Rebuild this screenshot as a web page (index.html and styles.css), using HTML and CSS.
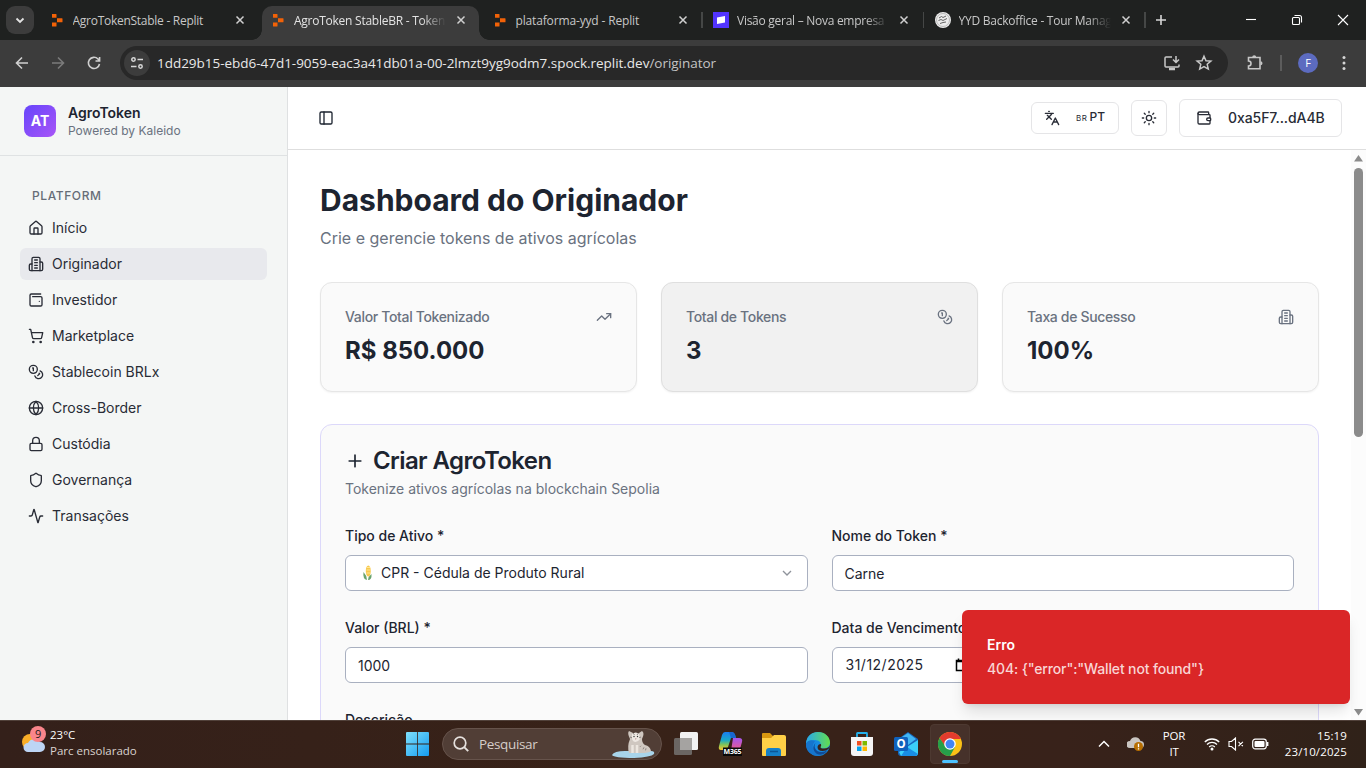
FILE: index.html
```html
<!DOCTYPE html>
<html lang="pt-BR">
<head>
<meta charset="utf-8">
<title>AgroToken StableBR</title>
<link rel="stylesheet" href="styles.css">
</head>
<body>
<svg class="defs" width="0" height="0">
  <defs>
    <symbol id="building" viewBox="0 0 24 24"><path d="M6 22V4a2 2 0 0 1 2-2h8a2 2 0 0 1 2 2v18Z"/><path d="M6 12H4a2 2 0 0 0-2 2v6a2 2 0 0 0 2 2h2"/><path d="M18 9h2a2 2 0 0 1 2 2v9a2 2 0 0 1-2 2h-2"/><path d="M10 6h4M10 10h4M10 14h4M10 18h4"/></symbol>
    <symbol id="coins" viewBox="0 0 24 24"><circle cx="8" cy="8" r="6"/><path d="M18.09 10.37A6 6 0 1 1 10.34 18"/><path d="M7 6h1v4"/><path d="m16.71 13.88.7.71-2.82 2.82"/></symbol>
    <symbol id="replit" viewBox="0 0 16 16"><path fill="#f26207" d="M3 2h4q.5 0 .5.5V5.700H3.500q-.5 0-.5-.5zM8 6.200h5q.5 0 .5.5v3q0 .5-.5.5H8zM3 10.500h4.500V14q0 .5-.5.5H3.500q-.5 0-.5-.5z"/></symbol>
    <symbol id="x" viewBox="0 0 16 16"><path d="m4.500 4.500 7 7m0-7-7 7" fill="none" stroke="#d0d0d0" stroke-width="1.500"/></symbol>
  </defs>
</svg>
<div class="screen">
  <div class="tabstrip">
    <div class="tab-search"><svg width="12" height="12" viewBox="0 0 12 12"><path d="m2.500 4.500 3.500 3.500 3.500-3.500" fill="none" stroke="#e3e3e3" stroke-width="1.800"/></svg></div>
    <div class="tabs">
      <div class="tab"><svg class="fav"><use href="#replit"/></svg><span class="tt"><span class="t1">AgroTokenStable - Replit</span></span><svg class="cl"><use href="#x"/></svg></div>
      <div class="tab active"><svg class="fav"><use href="#replit"/></svg><span class="tt fade"><span class="t2">AgroToken StableBR - Tokeni</span></span><svg class="cl"><use href="#x"/></svg></div>
      <div class="tab"><svg class="fav"><use href="#replit"/></svg><span class="tt"><span class="t3">plataforma-yyd - Replit</span></span><svg class="cl"><use href="#x"/></svg></div>
      <div class="tab sep"><svg class="fav" viewBox="0 0 16 16"><path fill="#5234ff" d="M0 0h16v16H0z"/><path fill="#fff" d="M4 5.500 12 4v6.500L4 12z"/></svg><span class="tt fade"><span class="t4">Visão geral – Nova empresa</span></span><svg class="cl"><use href="#x"/></svg></div>
      <div class="tab sep"><svg class="fav" viewBox="0 0 16 16"><circle cx="8" cy="8" r="8" fill="#ececec"/><circle cx="8" cy="8" r="6.500" fill="none" stroke="#999" stroke-width=".6"/><path d="m4 6 2.500-1.500L8 5.500l3-1.500M3.500 8.500 6 7.500l2 1 4-2M5 11.500l3-1 3-.5" stroke="#555" stroke-width=".9" fill="none"/></svg><span class="tt fade"><span class="t5">YYD Backoffice - Tour Manag</span></span><svg class="cl"><use href="#x"/></svg></div>
      <div class="newtab sep"><svg width="16" height="16" viewBox="0 0 16 16"><path d="M8 3v10M3 8h10" stroke="#d6d6d6" stroke-width="1.600"/></svg></div>
    </div>
    <div class="winctl">
      <svg width="46" height="40" viewBox="0 0 46 40"><path d="M18 19.500h10"/></svg>
      <svg width="46" height="40" viewBox="0 0 46 40"><rect x="18.500" y="17.500" width="7" height="7" rx="1"/><path d="M20.500 15.500h5a2 2 0 0 1 2 2v5"/></svg>
      <svg width="46" height="40" viewBox="0 0 46 40"><path d="m18 15 10 10m0-10-10 10"/></svg>
    </div>
  </div>
  <div class="toolbar">
    <svg class="nav" viewBox="0 0 16 16"><path d="M14 8H3m5-5.500L2.500 8 8 13.500"/></svg>
    <svg class="nav dim" viewBox="0 0 16 16"><path d="M2 8h11M8 2.500 13.500 8 8 13.500"/></svg>
    <svg class="nav" viewBox="0 0 16 16"><path d="M13.500 9A5.600 5.600 0 1 1 12 4l1.500 1.800M13.600 2v4H9.500"/></svg>
    <div class="omni">
      <span class="site"><svg width="16" height="16" viewBox="0 0 16 16"><g fill="none" stroke="#d8d8d8" stroke-width="1.500"><circle cx="4.500" cy="4.500" r="1.700"/><circle cx="11.500" cy="11.500" r="1.700"/><path d="M8.500 4.500H14M2 11.500h5.500"/></g></svg></span>
      <span class="url">1dd29b15-ebd6-47d1-9059-eac3a41db01a-00-2lmzt9yg9odm7.spock.replit.dev<i>/originator</i></span>
      <svg class="oi" viewBox="0 0 18 18"><path d="M9 3H3q-1 0-1 1v8q0 1 1 1h12q1 0 1-1v-1.500M13 2v6.500m-3-3 3 3 3-3"/><path d="M6 15h6" stroke-width="2.500"/></svg>
      <svg class="oi" viewBox="0 0 18 18"><path d="m9 2.200 2 4.500 4.900.4-3.700 3.200 1.100 4.800L9 12.600l-4.300 2.500 1.100-4.800-3.700-3.200 4.900-.4z"/></svg>
    </div>
    <svg class="ext" viewBox="0 0 18 18"><path d="M2.500 3.500H14V14.800H2.500V12a2.300 2.300 0 0 0 0-5z"/><path d="M6.200 3.200a2 2 0 0 1 4 0zM14.500 7.200a2 2 0 0 1 0 4z" fill="#c7c7c7" stroke="none"/></svg>
    <span class="vbar"></span>
    <span class="avatar">F</span>
    <svg class="dots" width="4" height="16" viewBox="0 0 4 16"><g fill="#d6d6d6"><circle cx="2" cy="2.500" r="1.500"/><circle cx="2" cy="8" r="1.500"/><circle cx="2" cy="13.500" r="1.500"/></g></svg>
  </div>
  <div class="page">
    <aside class="sidebar">
      <div class="brand"><span class="logo">AT</span><div><div class="bname">AgroToken</div><div class="bsub">Powered by Kaleido</div></div></div>
      <div class="group">
        <div class="glabel">PLATFORM</div>
        <nav class="menu">
          <a><svg class="ic" viewBox="0 0 24 24"><path d="M15 21v-8a1 1 0 0 0-1-1h-4a1 1 0 0 0-1 1v8"/><path d="M3 10a2 2 0 0 1 .709-1.528l7-5.999a2 2 0 0 1 2.582 0l7 5.999A2 2 0 0 1 21 10v9a2 2 0 0 1-2 2H5a2 2 0 0 1-2-2z"/></svg><span>Início</span></a>
          <a class="on"><svg class="ic"><use href="#building"/></svg><span>Originador</span></a>
          <a><svg class="ic" viewBox="0 0 24 24"><path d="M17 14h.01"/><path d="M7 7h12a2 2 0 0 1 2 2v10a2 2 0 0 1-2 2H5a2 2 0 0 1-2-2V5a2 2 0 0 1 2-2h14"/></svg><span>Investidor</span></a>
          <a><svg class="ic" viewBox="0 0 24 24"><circle cx="8" cy="21" r="1"/><circle cx="19" cy="21" r="1"/><path d="M2.050 2.050h2l2.660 12.420a2 2 0 0 0 2 1.580h9.780a2 2 0 0 0 1.950-1.570l1.650-7.430H5.120"/></svg><span>Marketplace</span></a>
          <a><svg class="ic"><use href="#coins"/></svg><span>Stablecoin BRLx</span></a>
          <a><svg class="ic" viewBox="0 0 24 24"><circle cx="12" cy="12" r="10"/><path d="M12 2a14.500 14.500 0 0 0 0 20 14.500 14.500 0 0 0 0-20M2 12h20"/></svg><span>Cross-Border</span></a>
          <a><svg class="ic" viewBox="0 0 24 24"><rect width="18" height="11" x="3" y="11" rx="2"/><path d="M7 11V7a5 5 0 0 1 10 0v4"/></svg><span>Custódia</span></a>
          <a><svg class="ic" viewBox="0 0 24 24"><path d="M20 13c0 5-3.500 7.500-7.660 8.950a1 1 0 0 1-.67-.01C7.500 20.500 4 18 4 13V6a1 1 0 0 1 1-1c2 0 4.500-1.200 6.240-2.720a1.170 1.170 0 0 1 1.520 0C14.510 3.810 17 5 19 5a1 1 0 0 1 1 1z"/></svg><span>Governança</span></a>
          <a><svg class="ic" viewBox="0 0 24 24"><path d="M22 12h-2.480a2 2 0 0 0-1.930 1.460l-2.350 8.360a.25.25 0 0 1-.48 0L9.240 2.180a.25.25 0 0 0-.48 0l-2.350 8.360A2 2 0 0 1 4.490 12H2"/></svg><span>Transações</span></a>
        </nav>
      </div>
    </aside>
    <main class="main">
      <header class="top">
        <svg class="ic panel" viewBox="0 0 24 24"><rect width="18" height="18" x="3" y="3" rx="2"/><path d="M9 3v18"/></svg>
        <div class="acts">
          <button class="btn lang"><svg class="ic" viewBox="0 0 24 24"><path d="m5 8 6 6M4 14l6-6 2-3M2 5h12M7 2h1M22 22l-5-10-5 10M14 18h6"/></svg><span><small>BR</small> PT</span></button>
          <button class="btn sun"><svg class="ic" viewBox="0 0 24 24"><circle cx="12" cy="12" r="4"/><path d="M12 2v2M12 20v2M4.930 4.930l1.410 1.410M17.660 17.660l1.410 1.410M2 12h2M20 12h2M6.340 17.660l-1.410 1.410M19.070 4.930l-1.410 1.410"/></svg></button>
          <button class="btn wal"><svg class="ic" viewBox="0 0 24 24"><path d="M19 7V4a1 1 0 0 0-1-1H5a2 2 0 0 0 0 4h15a1 1 0 0 1 1 1v4h-3a2 2 0 0 0 0 4h3a1 1 0 0 0 1-1v-2a1 1 0 0 0-1-1"/><path d="M3 5v14a2 2 0 0 0 2 2h15a1 1 0 0 0 1-1v-4"/></svg><span>0xa5F7...dA4B</span></button>
        </div>
      </header>
      <div class="scroll">
        <div class="content">
          <h1>Dashboard do Originador</h1>
          <p class="sub">Crie e gerencie tokens de ativos agrícolas</p>
          <section class="stats">
            <div class="card"><div class="ch"><span>Valor Total Tokenizado</span><svg class="ic" viewBox="0 0 24 24"><path d="M22 7 13.500 15.500 8.500 10.500 2 17"/><path d="M16 7h6v6"/></svg></div><b>R$ 850.000</b></div>
            <div class="card hov"><div class="ch"><span>Total de Tokens</span><svg class="ic"><use href="#coins"/></svg></div><b>3</b></div>
            <div class="card"><div class="ch"><span>Taxa de Sucesso</span><svg class="ic"><use href="#building"/></svg></div><b>100%</b></div>
          </section>
          <section class="form">
            <h2><svg class="plus" viewBox="0 0 24 24"><path d="M5 12h14M12 5v14"/></svg>Criar AgroToken</h2>
            <p class="fsub">Tokenize ativos agrícolas na blockchain Sepolia</p>
            <div class="fields">
              <div><label>Tipo de Ativo *</label><div class="inp sel"><svg class="corn" width="11" height="16" viewBox="0 0 11 16"><ellipse cx="6.300" cy="6" rx="2.500" ry="5.500" fill="#f8c84e"/><path d="M5 2.500h3M4.500 5h4M4.500 8h4" stroke="#fff0a4" stroke-width=".8"/><path d="M1.500 7q3 3 3.500 8-4.500-1-3.500-8M9.500 9q-3 2-3.500 6 4 0 3.500-6" fill="#69a36e"/></svg><span>CPR - Cédula de Produto Rural</span><svg class="chev" viewBox="0 0 24 24"><path d="m6 9 6 6 6-6"/></svg></div></div>
              <div><label>Nome do Token *</label><div class="inp">Carne</div></div>
              <div><label>Valor (BRL) *</label><div class="inp">1000</div></div>
              <div><label>Data de Vencimento *</label><div class="inp date"><span>31/12/2025</span><svg width="14" height="16" viewBox="0 0 14 16"><path d="M1.500 3.500h11v10h-11zM1.500 4.500h11M3.500 1.500v2M10.500 1.500v2" fill="none" stroke="#000" stroke-width="1.500"/></svg></div></div>
              <div><label>Descrição</label></div>
            </div>
          </section>
        </div>
        <div class="sbar"><svg width="9" height="7"><path d="M4.500 0 9 6.500H0z" fill="#8b8b8b"/></svg><span class="thumb"></span><svg class="dn" width="9" height="7"><path d="M0 0h9L4.500 6.500z" fill="#8b8b8b"/></svg></div>
      </div>
    </main>
  </div>
  <div class="toast"><strong>Erro</strong><span>404: {"error":"Wallet not found"}</span></div>
  <footer class="taskbar">
    <div class="weather">
      <svg width="30" height="38" viewBox="0 0 30 38"><circle cx="10" cy="18" r="8" fill="#f9ae28"/><path d="M8 28a4.500 4.500 0 0 1 0-9 7 7 0 0 1 12-1 5 5 0 0 1 0 10z" fill="#bdd5f5"/><circle cx="18" cy="10" r="8" fill="#f9858b"/><text x="18" y="14" text-anchor="middle" font-size="11" fill="#1b1b1b">9</text></svg>
      <div class="wtext"><span>23°C</span><span class="wsub">Parc ensolarado</span></div>
    </div>
    <div class="apps">
      <svg class="win" width="23" height="24" viewBox="0 0 23 24"><defs><linearGradient id="wg" x2="1" y2="1" gradientUnits="objectBoundingBox"><stop stop-color="#7fe0fc"/><stop offset="1" stop-color="#149cf0"/></linearGradient></defs><path fill="url(#wg)" d="M1 0h10.200v11.500H0V1q0-1 1-1zM12 0h10q1 0 1 1v10.500H12zM0 12.500h11.200V24H1q-1 0-1-1zM12 12.500h11V23q0 1-1 1H12z"/></svg>
      <div class="search">
        <svg width="18" height="18" viewBox="0 0 18 18"><circle cx="8" cy="8" r="5.800" fill="none" stroke="#e5e0dd" stroke-width="1.700"/><path d="m12.200 12.200 4 4" stroke="#e5e0dd" stroke-width="1.900"/></svg>
        <span>Pesquisar</span>
        <svg class="tiger" width="44" height="28" viewBox="0 0 44 28"><path d="M1 25q2-4 13-4h26q4 0 3 3-3 3-20 4-20 0-22-3z" fill="#a8d4ea"/><path d="M19 9q-3-6-1-8l4 2h6l3-2q3 2 0 8 0 4 3 6 5 1 6 6-2 2-10 2H18q-2-7 1-14z" fill="#cfc7c0"/><path d="M21 4q4-3 7 0l1 5q-2 3-4.500 3T21 9z" fill="#eee8e2"/><path d="m22 3 1.500 2m4-2-1.500 2M19 7l2 .8m9-.8-2 .8m-7 8 1 1m8-1-1 1m4 .5-1 2m3-1-.5 2" stroke="#7a7270" stroke-width=".8" fill="none"/><circle cx="23" cy="6.500" r=".7" fill="#333"/><circle cx="26.500" cy="6.500" r=".7" fill="#333"/><path d="m24 8.500.8 1.300.8-1.300z" fill="#a66c70"/><path d="M21.500 15v8m4.500-8v8" stroke="#ece6df" stroke-width="2.500"/></svg>
      </div>
      <svg class="app" viewBox="0 0 24 24"><rect x="6" y="0" width="18" height="18" rx="1.500" fill="#f2f2f2"/><rect x="0" y="6" width="18" height="17" rx="1.500" fill="#6b6663"/><path d="M6 6h12v12H6z" fill="#a5a3a1"/></svg>
      <svg class="app" viewBox="0 0 24 24"><defs><linearGradient id="mg" x2="0" y2="1"><stop stop-color="#1a7df0"/><stop offset=".45" stop-color="#19a8c8"/><stop offset=".7" stop-color="#7fc25a"/><stop offset="1" stop-color="#fac72b"/></linearGradient><linearGradient id="mh" x2="0" y2="1"><stop stop-color="#a555ef"/><stop offset="1" stop-color="#f55b7c"/></linearGradient></defs><path d="M7 0h7q2 0 3 3l1 3h-5l-3 9q-1 3-4 3H3q-3 0-2-4L4 3q1-3 3-3z" fill="url(#mg)"/><path d="M11 0h3q3 0 4 6h-5z" fill="#1767d0"/><path d="M15 6h6q4 0 3 4l-2 7q-1 3-5 3h-6q2 0 2.500-4z" fill="url(#mh)"/><rect x="5" y="15.500" width="19" height="8.500" fill="#080808"/><text x="14.500" y="22.300" text-anchor="middle" font-size="7" font-weight="700" fill="#fff">M365</text></svg>
      <svg class="app" viewBox="0 0 24 24"><path d="M0 2q0-1 1-1h7l3 3h11q2 0 2 2v4H0z" fill="#d99810"/><path d="M0 6h9l3-3h10q2 0 2 2v18q0 1-1 1H1q-1 0-1-1z" fill="#ffd047"/><path d="M4 24v-5q0-3 3-3h9q3 0 3 3v5z" fill="#1580c8"/><path d="M8 19.500h8" stroke="#0b5697" stroke-width="1.500"/></svg>
      <svg class="app" viewBox="0 0 24 24"><defs><linearGradient id="eg"><stop stop-color="#28a8ed"/><stop offset="1" stop-color="#63df4d"/></linearGradient></defs><circle cx="12" cy="12" r="12" fill="#168be0"/><path d="M.1 10.500C1 4 6 0 12 0c7 0 12 5 12 10.500 0 3.500-3 6-6.500 6-3 0-4-1.200-3.200-2.600C16 11 13 8 9 8 5 8 1.500 9 .1 12z" fill="url(#eg)"/><path d="M9 9.500c-4 3-3 12 5.500 14C7 25-.5 20 0 11.500 2 8 6 7.500 9 9.500z" fill="#1675cd"/><path d="M9.500 11c-2.500 4 .5 9 6 9q3.500 0 6-2c-4 7-12 6-14-.5-.5-2.500.3-5 2-6.500z" fill="#114c98"/><path d="M25 12q-2 4.500-7 4.500-3.500 0-3.500-1.500 1-1.200.5-3-3 0-3.500 3 0 4 5 4 3.500 0 6-2z" fill="#38231a"/></svg>
      <svg class="app" viewBox="0 0 24 24"><path d="M7 6V1.500Q7 1 7.500 1h9q.5 0 .5.500V6" fill="none" stroke="#23b1ed" stroke-width="1.800"/><path d="M1 5h22v16q0 3-3 3H4q-3 0-3-3z" fill="#f5f5f5"/><path fill="#f05022" d="M7 9h4.500v4.500H7z"/><path fill="#7fb900" d="M12.500 9H17v4.500h-4.500z"/><path fill="#01a3ee" d="M7 14.500h4.500V19H7z"/><path fill="#feb800" d="M12.500 14.500H17V19h-4.500z"/></svg>
      <svg class="app" viewBox="0 0 24 24"><path d="m4 7 10-7 10 7v14q0 3-3 3H7q-3 0-3-3z" fill="#1667bd"/><path d="m8 5 6-4 8 6-8 6H8z" fill="#42b6f3"/><path d="m5 20 19-12v13q0 3-3 3H7z" fill="#3bd0fa"/><path d="m13 15 11 7q-1 2-3 2H7z" fill="#198ee4"/><rect y="5" width="14" height="14" rx="1.500" fill="#0f62bd"/><text x="7" y="16" text-anchor="middle" font-size="11.500" font-weight="700" fill="#fff">O</text></svg>
      <div class="chrome"><svg width="24" height="24" viewBox="0 0 24 24"><circle cx="12" cy="12" r="12" fill="#fbc116"/><path d="M1.600 6A12 12 0 0 1 22.400 6L23 7H12l-4.700 8z" fill="#e33b2e"/><path d="M1.600 6A12 12 0 0 0 12 24l5-9-9.500-.5z" fill="#269f4a"/><circle cx="12" cy="12" r="5.800" fill="#fff"/><circle cx="12" cy="12" r="4.500" fill="#4285f4"/></svg></div>
    </div>
    <div class="tray">
      <svg class="up" width="12" height="8" viewBox="0 0 12 8"><path d="m1 6.500 5-5 5 5" fill="none" stroke="#fff" stroke-width="1.500"/></svg>
      <svg class="cloud" width="17" height="16" viewBox="0 0 17 16"><path d="M3 12a3.500 3.500 0 0 1 0-7 5.500 5.500 0 0 1 10.500 0 3.500 3.500 0 0 1 0 7z" fill="#c9c5c1"/><circle cx="11.500" cy="10.500" r="4.500" fill="#b76e00"/><path d="M11.500 7.700v3.500m0 1v1.300" stroke="#fff" stroke-width="1.300"/></svg>
      <div class="kb"><span>POR</span><span>IT</span></div>
      <svg class="wifi" width="16" height="14" viewBox="0 0 16 14"><g fill="none" stroke="#fff" stroke-width="1.300"><path d="M.8 5a10.200 10.200 0 0 1 14.400 0M3 7.500a7 7 0 0 1 10 0M5.200 10a4 4 0 0 1 5.600 0"/></g><circle cx="8" cy="12" r="1.500" fill="#fff"/></svg>
      <svg class="vol" width="16" height="14" viewBox="0 0 16 14"><path d="M1 4.500h2.500L7.500 1v12L3.500 9.500H1zM10.500 4.800l4.400 4.400m0-4.400-4.400 4.400" fill="none" stroke="#fff" stroke-width="1.100"/></svg>
      <svg class="bat" width="17" height="12" viewBox="0 0 17 12"><rect x=".7" y="1.200" width="13.600" height="9.600" rx="2.500" fill="none" stroke="#fff" stroke-width="1.200"/><rect x="2.500" y="3" width="10" height="6" rx="1" fill="#fff"/><path d="M15.700 4v4" stroke="#fff" stroke-width="1.400"/></svg>
      <div class="clock"><span>15:19</span><span class="cdate">23/10/2025</span></div>
    </div>
  </footer>
</div>
</body>
</html>
```
FILE: styles.css
```css
* { box-sizing: border-box; }
body { margin: 0; overflow: hidden; font-family: Inter, sans-serif; color: #1d2430; }
svg { flex: none; display: block; }
.defs { position: absolute; }
.screen { position: relative; width: 1366px; height: 768px; display: flex; flex-direction: column; overflow: hidden; }
.tabstrip, .toolbar, .taskbar { font-family: "Open Sans", "Noto Sans", sans-serif; }

.tabstrip { height: 40px; background: #1f2120; display: flex; align-items: center; flex: none; }
.tab-search { width: 28px; height: 28px; margin-left: 6px; border-radius: 9px; background: #3c3c3c; display: flex; align-items: center; justify-content: center; }
.tabs { display: flex; height: 40px; align-items: stretch; margin-left: 5.500px; }
.tab { width: 221.500px; padding-left: 9px; display: flex; align-items: center; position: relative; font-size: 12px; color: #c7c7c7; }
.fav { width: 16px; height: 16px; margin-right: 8px; }
.tt { width: 154px; overflow: hidden; white-space: nowrap; line-height: 20px; padding-top: 2px; margin-right: 5px; }
.tt.fade { -webkit-mask-image: linear-gradient(90deg, #000 128px, transparent 152px); mask-image: linear-gradient(90deg, #000 128px, transparent 152px); }
.t1, .t4 { letter-spacing: -.27px; }
.t3 { letter-spacing: -.15px; }
.t2, .t5 { letter-spacing: -.25px; }
.cl { width: 16px; height: 16px; }
.active { color: #e3e3e3; }
.active::before { content: ""; position: absolute; left: 1px; right: 4px; top: 6px; bottom: 0; background: #3c3c3c; border-radius: 10px 10px 0 0; }
.active > * { position: relative; }
.active::after { content: ""; position: absolute; left: -9px; right: -6px; bottom: 0; height: 10px; background: radial-gradient(circle at 0 0, transparent 9.500px, #3c3c3c 10px) left / 10px 10px no-repeat, radial-gradient(circle at 100% 0, transparent 9.500px, #3c3c3c 10px) right / 10px 10px no-repeat; }
.sep::before { content: ""; position: absolute; left: -3px; top: 12px; width: 1.500px; height: 16px; background: #454746; }
.newtab { position: relative; width: 32px; display: flex; align-items: center; padding-left: 6px; }
.winctl { margin-left: auto; display: flex; }
.winctl path, .winctl rect { fill: none; stroke: #fff; stroke-width: 1.100; }

.toolbar { height: 47px; background: #3c3c3c; display: flex; align-items: center; flex: none; padding: 0 0 1px 14px; }
.nav { width: 16px; height: 16px; margin-right: 20px; fill: none; stroke: #d0d0d0; stroke-width: 1.600; }
.nav.dim { stroke: #7b7b7b; }
.omni { margin-left: -2px; width: 1108px; height: 34px; border-radius: 17px; background: #282828; display: flex; align-items: center; padding: 0 15px 0 4px; }
.site { width: 26px; height: 26px; border-radius: 13px; background: #3c3c3c; display: flex; align-items: center; justify-content: center; margin-right: 7px; }
.url { font-size: 13.500px; letter-spacing: -.025px; color: #e8e8e8; flex: 1; white-space: nowrap; }
.url i { font-style: normal; color: #c4c4c4; }
.oi { width: 18px; height: 18px; fill: none; stroke: #c7c7c7; stroke-width: 1.500; margin-left: 14px; }
.ext { width: 18px; height: 18px; fill: none; stroke: #c7c7c7; stroke-width: 1.600; margin-left: 18px; }
.vbar { width: 2px; height: 16px; background: #5c5c5c; margin-left: 16px; }
.avatar { width: 20px; height: 20px; border-radius: 50%; background: #5c6bc0; color: #fff; font-size: 11px; line-height: 20px; text-align: center; margin-left: 16px; }
.dots { margin-left: 24px; }

.page { height: 633px; display: flex; background: #fff; }
.ic { width: 16px; height: 16px; fill: none; stroke: currentColor; stroke-width: 2; stroke-linecap: round; stroke-linejoin: round; }
.sidebar { width: 288px; background: #f4f6f5; border-right: 1px solid #dfe1e2; flex: none; }
.brand { height: 69px; border-bottom: 1px solid #dfe2e3; display: flex; align-items: center; padding-left: 24px; gap: 12px; }
.logo { width: 32px; height: 32px; border-radius: 8px; background: linear-gradient(135deg, #6645fb, #a855f7); color: #fff; font-weight: 700; font-size: 14px; line-height: 32px; text-align: center; }
.bname { font-size: 14px; font-weight: 600; line-height: 20px; }
.bsub { font-size: 12px; line-height: 16px; color: #6a7280; }
.group { padding: 24px 20px 0; }
.glabel { height: 32px; padding-left: 12px; line-height: 32px; font-size: 12px; font-weight: 500; letter-spacing: .6px; color: #666d77; }
.menu { display: flex; flex-direction: column; gap: 4px; }
.menu a { height: 32px; border-radius: 6px; display: flex; align-items: center; gap: 8px; padding-left: 8px; font-size: 14px; color: #292c36; }
.menu span { line-height: 20px; padding-bottom: 1px; }
.menu .on { background: #e8e9ed; }

.main { flex: 1; display: flex; flex-direction: column; min-width: 0; }
.top { height: 63px; border-bottom: 1px solid #dedede; display: flex; align-items: center; justify-content: space-between; padding: 0 24px 0 30px; flex: none; }
.acts { display: flex; align-items: center; gap: 12px; }
.btn { background: #fff; border: 1px solid #e5e5e7; border-radius: 6px; display: flex; align-items: center; font-family: Inter, sans-serif; font-weight: 500; color: #292c36; padding: 0; white-space: nowrap; }
.lang { width: 88px; height: 32px; font-size: 12px; padding-left: 12px; gap: 16px; }
.lang span { line-height: 16px; padding-bottom: 2px; }
.lang small { font-size: 8px; letter-spacing: .5px; font-weight: 400; margin-right: -1px; }
.sun { width: 36px; height: 36px; justify-content: center; }
.wal { width: 163px; height: 38px; font-size: 14px; padding-left: 16px; gap: 16px; letter-spacing: -.07px; }
.wal span { line-height: 20px; padding-bottom: 1px; }
.scroll { flex: 1; display: flex; min-height: 0; overflow: hidden; }
.content { width: 1063px; padding: 32px; flex: none; }
h1 { margin: 0; font-size: 30px; line-height: 36px; font-weight: 700; }
.sub { margin: 8px 0 32px; font-size: 16px; line-height: 24px; color: #6a7280; }
.stats { display: grid; grid-template-columns: repeat(3, 1fr); gap: 24px; }
.card { height: 110px; border: 1px solid #e6e6e6; border-radius: 12px; background: #fafafa; padding: 24px; box-shadow: 0 1px 2px rgba(0,0,0,.05); }
.card.hov { background: #f1f1f1; border-color: #dfdfdf; }
.ch { display: flex; justify-content: space-between; align-items: center; height: 20px; font-size: 14px; font-weight: 500; letter-spacing: -.34px; color: #6a7280; margin-bottom: 8px; }
.ch span { line-height: 20px; padding-bottom: 1px; }
.card b { display: block; font-size: 24px; line-height: 32px; font-weight: 700; }
.form { margin-top: 32px; height: 500px; border: 1px solid #dcd8fa; border-radius: 12px; background: #fafafa; padding: 24px; }
h2 { margin: 0; display: flex; align-items: center; gap: 8px; font-size: 24px; line-height: 24px; font-weight: 600; letter-spacing: -.6px; }
.plus { width: 20px; height: 20px; fill: none; stroke: currentColor; stroke-width: 2; stroke-linecap: round; }
.fsub { margin: 6px 0 27px; font-size: 14px; line-height: 20px; color: #6a7280; }
.fields { display: grid; grid-template-columns: 1fr 1fr; gap: 27px 24px; }
label { display: block; height: 29px; line-height: 20px; font-size: 14px; font-weight: 500; }
.inp { height: 36px; border: 1px solid #a9b0c0; border-radius: 6px; background: #fff; padding: 0 12px; font-size: 14px; line-height: 20px; display: flex; align-items: center; padding-top: 1px; }
.sel { padding-top: 0; }
.sel span { flex: 1; margin-left: 8px; padding-bottom: 1px; }
.corn { margin-left: 4px; }
.chev { width: 16px; height: 16px; fill: none; stroke: #8f939b; stroke-width: 2; }
.date { padding: 0 12px 1px 13px; }
.date span { width: 109px; letter-spacing: .5px; }
.sbar { width: 15px; background: #fcfcfc; display: flex; flex-direction: column; align-items: center; padding-top: 5px; }
.thumb { width: 9px; height: 269px; border-radius: 5px; background: #8b8b8b; margin-top: 6px; }
.sbar .dn { margin-top: auto; margin-bottom: 4px; }
.toast { position: absolute; left: 962px; top: 610px; width: 388px; height: 94px; background: #da2627; border-radius: 6px; padding: 25px; display: flex; flex-direction: column; gap: 4px; color: #fff; font-size: 14px; line-height: 20px; box-shadow: 0 10px 15px -3px rgba(0,0,0,.12), 0 4px 6px -4px rgba(0,0,0,.12); }
.toast strong { font-weight: 600; }
.toast span { color: #f8d5d5; font-weight: 500; letter-spacing: -.14px; }

.taskbar { height: 48px; background: linear-gradient(90deg, #34201a, #382218 45%, #38221a 78%, #302219); border-top: 1px solid #51413a; color: #fff; font-size: 11.500px; display: grid; grid-template-columns: 404px 580px 1fr; letter-spacing: -.2px; }
.weather { display: flex; padding: 0 0 3px 20px; align-items: center; }
.wtext { display: flex; flex-direction: column; line-height: 16px; letter-spacing: 0; }
.wsub { color: #d9d3cf; }
.apps { display: flex; align-items: center; padding: 0 0 1px 2px; }
.search { width: 220px; height: 32px; margin: 0 12px 0 13px; border-radius: 16px; border: 1px solid #66534b; background: #513e36; display: flex; align-items: center; padding: 0 6px 0 9px; color: #d5cdc9; font-size: 13.500px; }
.search span { margin-left: 9px; flex: 1; letter-spacing: -.35px; }
.app { width: 24px; height: 24px; margin-right: 20px; overflow: visible; }
.chrome { position: relative; width: 40px; height: 40px; border-radius: 4px; background: #46312a; border: 1px solid #4d3931; margin-left: -8px; display: flex; align-items: center; justify-content: center; }
.chrome::after { content: ""; position: absolute; left: 11px; bottom: 0; width: 16px; height: 3px; border-radius: 2px; background: #4cc2ff; }
.tray { display: flex; align-items: center; padding: 0 19px 1px 0; }
.up { margin-left: 114px; }
.cloud { margin-left: 17px; }
.kb { display: flex; flex-direction: column; text-align: center; line-height: 16px; width: 30px; margin-left: 15px; }
.wifi { margin-left: 15px; }
.vol { margin-left: 8px; }
.bat { margin-left: 8px; }
.clock { margin-left: auto; display: flex; flex-direction: column; text-align: right; line-height: 16px; padding-bottom: 1px; letter-spacing: .12px; }
```
